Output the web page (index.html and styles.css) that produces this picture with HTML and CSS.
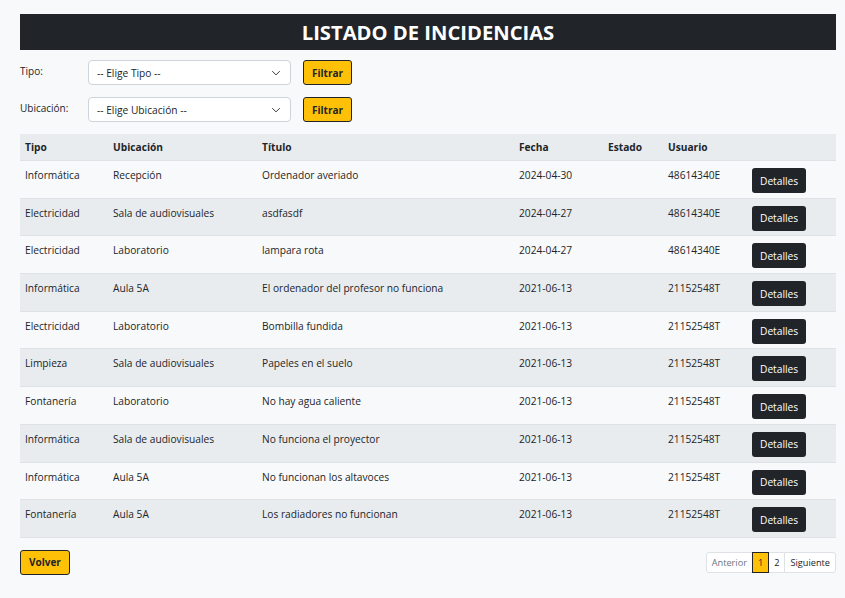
FILE: index.html
```html
<!DOCTYPE html>
<html lang="es">
<head>
<meta charset="utf-8">
<title>Listado de incidencias</title>
<link rel="stylesheet" href="styles.css">
</head>
<body>
<main class="page">
  <h1 class="title">LISTADO DE INCIDENCIAS</h1>

  <form class="filters">
    <div class="filter-row">
      <label class="filter-label">Tipo:</label>
      <div class="select">
        <span>-- Elige Tipo --</span>
        <svg class="chev" viewBox="0 0 16 16" width="10" height="10"><path d="M2 5l6 6 6-6" fill="none" stroke="#343a40" stroke-width="1.6"/></svg>
      </div>
      <button type="button" class="btn-yellow">Filtrar</button>
    </div>
    <div class="filter-row">
      <label class="filter-label">Ubicación:</label>
      <div class="select">
        <span>-- Elige Ubicación --</span>
        <svg class="chev" viewBox="0 0 16 16" width="10" height="10"><path d="M2 5l6 6 6-6" fill="none" stroke="#343a40" stroke-width="1.6"/></svg>
      </div>
      <button type="button" class="btn-yellow">Filtrar</button>
    </div>
  </form>

  <table class="grid">
    <colgroup>
      <col class="c-tipo"><col class="c-ubi"><col class="c-tit"><col class="c-fecha"><col class="c-estado"><col class="c-usr"><col class="c-btn">
    </colgroup>
    <thead>
      <tr><th>Tipo</th><th>Ubicación</th><th>Título</th><th>Fecha</th><th>Estado</th><th>Usuario</th><th></th></tr>
    </thead>
    <tbody>
      <tr><td>Informática</td><td>Recepción</td><td>Ordenador averiado</td><td>2024-04-30</td><td></td><td>48614340E</td><td><button type="button" class="btn-dark">Detalles</button></td></tr>
      <tr><td>Electricidad</td><td>Sala de audiovisuales</td><td>asdfasdf</td><td>2024-04-27</td><td></td><td>48614340E</td><td><button type="button" class="btn-dark">Detalles</button></td></tr>
      <tr><td>Electricidad</td><td>Laboratorio</td><td>lampara rota</td><td>2024-04-27</td><td></td><td>48614340E</td><td><button type="button" class="btn-dark">Detalles</button></td></tr>
      <tr><td>Informática</td><td>Aula 5A</td><td>El ordenador del profesor no funciona</td><td>2021-06-13</td><td></td><td>21152548T</td><td><button type="button" class="btn-dark">Detalles</button></td></tr>
      <tr><td>Electricidad</td><td>Laboratorio</td><td>Bombilla fundida</td><td>2021-06-13</td><td></td><td>21152548T</td><td><button type="button" class="btn-dark">Detalles</button></td></tr>
      <tr><td>Limpieza</td><td>Sala de audiovisuales</td><td>Papeles en el suelo</td><td>2021-06-13</td><td></td><td>21152548T</td><td><button type="button" class="btn-dark">Detalles</button></td></tr>
      <tr><td>Fontanería</td><td>Laboratorio</td><td>No hay agua caliente</td><td>2021-06-13</td><td></td><td>21152548T</td><td><button type="button" class="btn-dark">Detalles</button></td></tr>
      <tr><td>Informática</td><td>Sala de audiovisuales</td><td>No funciona el proyector</td><td>2021-06-13</td><td></td><td>21152548T</td><td><button type="button" class="btn-dark">Detalles</button></td></tr>
      <tr><td>Informática</td><td>Aula 5A</td><td>No funcionan los altavoces</td><td>2021-06-13</td><td></td><td>21152548T</td><td><button type="button" class="btn-dark">Detalles</button></td></tr>
      <tr><td>Fontanería</td><td>Aula 5A</td><td>Los radiadores no funcionan</td><td>2021-06-13</td><td></td><td>21152548T</td><td><button type="button" class="btn-dark">Detalles</button></td></tr>
    </tbody>
  </table>

  <div class="footer">
    <button type="button" class="btn-yellow btn-volver">Volver</button>
    <nav class="pager">
      <span class="pg pg-muted">Anterior</span>
      <span class="pg pg-active">1</span>
      <span class="pg">2</span>
      <span class="pg">Siguiente</span>
    </nav>
  </div>
</main>
</body>
</html>
```
FILE: styles.css
```css
* { box-sizing: border-box; }
html, body { margin: 0; padding: 0; }
body {
  background: #f8f9fa;
  font-family: "Open Sans", "Noto Sans", "Liberation Sans", sans-serif;
  font-size: 10.2px;
  color: #212529;
}
.page {
  margin: 14px 9px 0 20px;
}
.title {
  margin: 0;
  height: 36px;
  line-height: 36px;
  background: #212529;
  color: #fff;
  text-align: center;
  font-size: 20.2px;
  font-weight: 700;
}
.filters {
  margin-top: 10px;
  display: flex;
  flex-direction: column;
  gap: 12px;
}
.filter-row {
  display: flex;
  align-items: flex-start;
}
.filter-label {
  width: 68px;
  padding-top: 4px;
  line-height: 14px;
  font-size: 10px;
}
.select {
  width: 203px;
  height: 25px;
  background: #fff;
  border: 1px solid #ced4da;
  border-radius: 4px;
  display: flex;
  align-items: center;
  justify-content: space-between;
  padding: 0 9px 0 8px;
  font-size: 10.2px;
}
.chev { display: block; }
.btn-yellow {
  margin-left: 12px;
  height: 25px;
  padding: 0 8px;
  background: #ffc107;
  border: 1px solid #212529;
  border-radius: 3px;
  font-family: inherit;
  font-size: 10px;
  font-weight: 700;
  color: #212529;
}
.grid {
  margin-top: 12px;
  width: 100%;
  border-collapse: collapse;
  table-layout: fixed;
}
.c-tipo { width: 88px; }
.c-ubi { width: 149px; }
.c-tit { width: 257px; }
.c-fecha { width: 89px; }
.c-estado { width: 60px; }
.c-usr { width: 84px; }
.c-btn { width: 89px; }
.grid th {
  text-align: left;
  background: #e9ecef;
  font-weight: 700;
  padding: 6px 5px;
  line-height: 14px;
  border-bottom: 1px solid #dee2e6;
}
.grid td {
  vertical-align: top;
  padding: 7px 5px 4.7px;
  line-height: 15px;
  border-bottom: 1px solid #dee2e6;
  white-space: nowrap;
}
.grid tbody tr:nth-child(even) td { background: #e9ecef; }
.btn-dark {
  display: block;
  height: 25px;
  padding: 0 8px;
  background: #212529;
  color: #fff;
  border: 0;
  border-radius: 3px;
  font-family: inherit;
  font-size: 10.2px;
}
.footer {
  margin-top: 12px;
  display: flex;
  justify-content: space-between;
  align-items: flex-start;
}
.btn-volver { margin-left: 0; }
.pager {
  margin-top: 2px;
  display: flex;
}
.pg {
  height: 21px;
  line-height: 19px;
  padding: 0 5px;
  border: 1px solid #dee2e6;
  margin-left: -1px;
  background: #fff;
  font-size: 9.2px;
  color: #212529;
}
.pg:first-child { border-radius: 3px 0 0 3px; }
.pg:last-child { border-radius: 0 3px 3px 0; }
.pg-muted { color: #6c757d; }
.pg-active {
  background: #ffc107;
  border-color: #212529;
  position: relative;
}
```
